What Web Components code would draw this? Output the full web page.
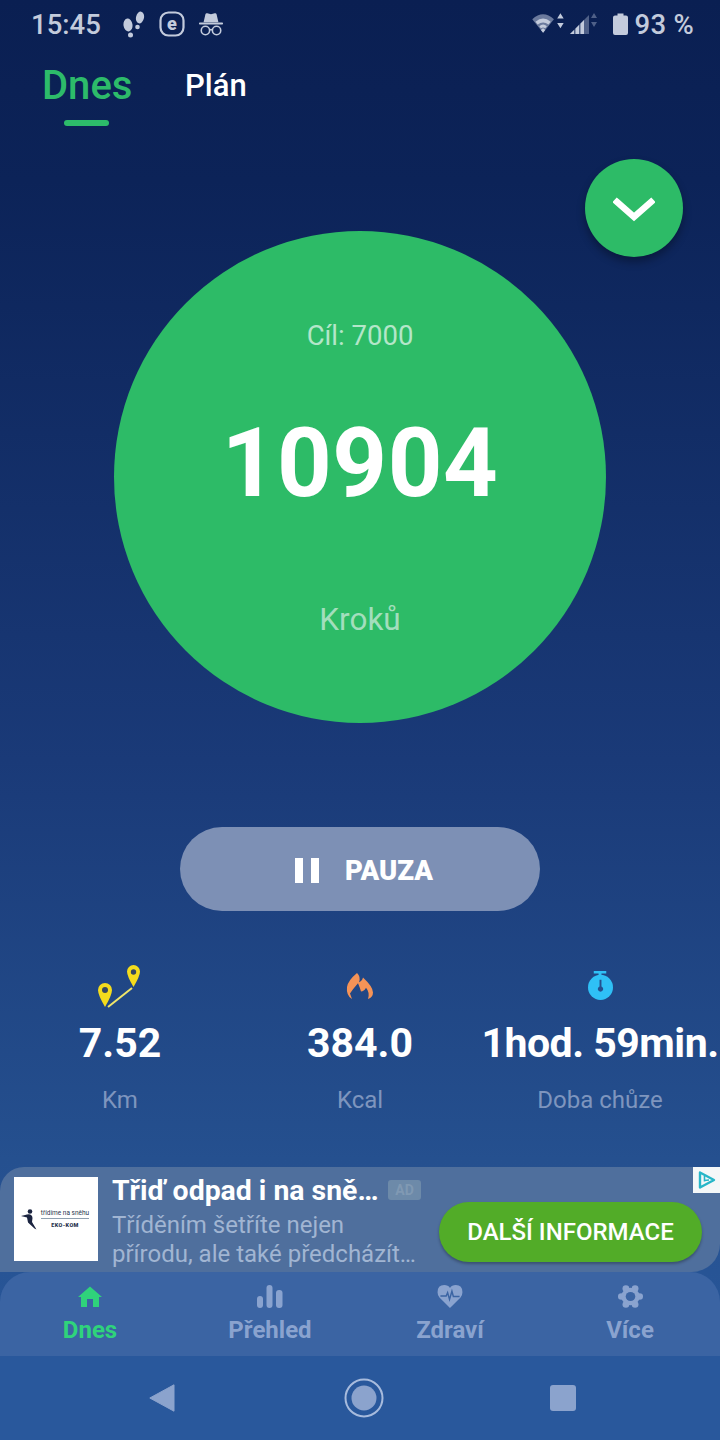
<!DOCTYPE html>
<html lang="cs"><head><meta charset="utf-8"><title>Kroky</title>
<style>
html,body{margin:0;padding:0}
body{font-family:Roboto,"Liberation Sans",sans-serif;background:#0b1f52}
</style></head><body>
<step-app>
  <status-bar></status-bar>
  <top-tabs></top-tabs>
  <step-dial goal="Cíl: 7000" steps="10904" label="Kroků"></step-dial>
  <pause-button>PAUZA</pause-button>
  <stat-row></stat-row>
  <ad-banner></ad-banner>
  <bottom-nav></bottom-nav>
  <system-nav></system-nav>
</step-app>
<script>
function def(name,html){
  customElements.define(name,class extends HTMLElement{
    connectedCallback(){
      if(this.shadowRoot)return;
      const r=this.attachShadow({mode:'open'});
      r.innerHTML=typeof html==='function'?html(this):html;
    }
  });
}
def('step-app',`<style>
:host{display:flex;flex-direction:column;width:720px;height:1440px;overflow:hidden;color:#fff;
background:linear-gradient(180deg,#0a1f52 0,#0c2358 180px,#1a3a78 760px,#25508f 1160px,#2a5a9e 1440px)}
</style><slot></slot>`);

def('status-bar',`<style>
:host{display:flex;align-items:center;height:48px;flex:none;padding:0 26px 0 31px;box-sizing:border-box;color:#c3cbdc;font-size:27.500px;font-weight:500}
.t{width:92px}
.l{display:flex;align-items:center;flex:1}
.r{display:flex;align-items:center}
svg{display:block}
</style>
<div class="l"><span class="t">15:45</span>
<svg width="22" height="27" viewBox="0 0 22 27" fill="#c3cbdc" style="margin-bottom:-1px"><ellipse cx="5" cy="14" rx="4.500" ry="6.500" transform="rotate(-8 5 14)"/><ellipse cx="7.500" cy="24" rx="2.500" ry="2.500"/><ellipse cx="17" cy="6.500" rx="4" ry="6" transform="rotate(12 17 6.500)"/><ellipse cx="14.500" cy="16" rx="2.300" ry="2.300"/></svg>
<svg width="26" height="26" viewBox="0 0 26 26" style="margin-left:14px"><rect x="1.500" y="1.500" width="23" height="23" rx="8" fill="none" stroke="#c3cbdc" stroke-width="2.200"/><text x="13" y="19" text-anchor="middle" font-family="Roboto,sans-serif" font-weight="900" font-size="18" fill="#c3cbdc">e</text></svg>
<svg width="26" height="26" viewBox="0 0 28 26" fill="#c3cbdc" style="margin-left:13px"><path d="M6 11 8 2.500Q8.500 1 10 1.500L14 2.500 18 1.500Q19.500 1 20 2.500L22 11Z"/><rect x="1" y="11.500" width="26" height="2" rx="1"/><g fill="none" stroke="#c3cbdc" stroke-width="1.700"><circle cx="8" cy="20" r="4.500"/><circle cx="20" cy="20" r="4.500"/><path d="M12.500 19.500Q14 18.500 15.500 19.500"/></g></svg>
</div>
<div class="r">
<svg width="33" height="26" viewBox="0 0 30 24"><path d="M0 7.500Q10-1.500 20 7.500L10 20Z" fill="#6b7a9d"/><path d="M3 10Q10 4 17 10L15 12.500Q10 8.500 5 12.500ZM6.500 14Q10 11 13.500 14L12 16Q10 14.500 8 16Z" fill="#c3cbdc"/><path d="M10 16 12 17.500 10 20 8 17.500Z" fill="#c3cbdc"/><path d="M26 2l3 5h-6zM26 16l3-5h-6z" fill="#c3cbdc"/></svg>
<svg width="31" height="24" viewBox="0 0 31 24" style="margin-left:4px"><path d="M1 22 20 3V22Z" fill="#4f6088"/><path d="M1 22 5 18V22ZM6.500 16.500 10 13V22H6.500ZM11.500 11.500 15 8V22H11.500Z" fill="#c3cbdc"/><path d="M25 1l3 5h-6zM25 15l3-5h-6z" fill="#4f6088"/></svg>
<svg width="15" height="24" viewBox="0 0 15 24" style="margin-left:13px"><path d="M4.500 1.500h6V3.500h2.500Q15 3.500 15 5.500V21Q15 23 13 23H2Q0 23 0 21V5.500Q0 3.500 2 3.500H4.500Z" fill="#c3cbdc"/></svg>
<span style="margin-left:6px;letter-spacing:.3px">93 %</span>
</div>`);

def('top-tabs',`<style>
:host{display:flex;height:84px;flex:none;padding-left:42px;box-sizing:border-box;font-weight:500}
.a{position:relative;color:#2dbb6a;font-size:40px;line-height:76px;width:143px}
.a i{position:absolute;left:22px;top:72px;width:45px;height:6px;border-radius:3px;background:#2dbb6a}
.b{font-size:31px;line-height:76px}
</style><div class="a">Dnes<i></i></div><div class="b">Plán</div>`);

def('step-dial',t=>`<style>
:host{display:block;position:relative;flex:none;height:492px;width:492px;margin:99px auto 0;}
.c{width:492px;height:492px;border-radius:50%;background:#2dbb67;display:flex;flex-direction:column;align-items:center;box-sizing:border-box}
.g{margin-top:87px;font-size:27.500px;line-height:36px;color:#b4e6c9}
.n{margin-top:53px;font-size:95.500px;line-height:112px;font-weight:700;color:#fff;letter-spacing:.5px}
.k{margin-top:81px;font-size:31.500px;line-height:40px;color:#a3deBd}
.f{position:absolute;left:471px;top:-72px;width:98px;height:98px;border-radius:50%;background:#2dbb67;box-shadow:0 5px 9px rgba(0,0,0,.32);display:flex;align-items:center;justify-content:center}
.f svg{margin-top:5px}
</style>
<div class="c"><div class="g">${t.getAttribute('goal')}</div><div class="n">${t.getAttribute('steps')}</div><div class="k">${t.getAttribute('label')}</div></div>
<div class="f"><svg width="42" height="28" viewBox="0 0 42 28"><path d="M4 5 21 20 38 5" fill="none" stroke="#fff" stroke-width="6.500" stroke-linecap="square"/></svg></div>`);

def('pause-button',`<style>
:host{display:flex;flex:none;align-items:center;justify-content:center;width:360px;height:84px;margin:104px auto 0;border-radius:42px;background:#7d90b5;box-sizing:border-box;padding:2px 0 0 8px;font-weight:900;font-size:27.500px;color:#fff}
i{display:block;width:8px;height:25px;background:#fff}
.p{display:flex;gap:8px;margin-right:26px}
</style><div class="p"><i></i><i></i></div><slot></slot>`);

def('stat-item',t=>`<style>
:host{display:flex;flex-direction:column;align-items:center;flex:1 1 0;min-width:0;white-space:nowrap}
.i{height:40px;margin-bottom:6px;display:flex;align-items:flex-end;justify-content:center}
.v{font-size:41px;font-weight:700;line-height:46px;margin-top:11px;color:#fff;letter-spacing:${t.hasAttribute('tight')?'-.5px':'0'}}
.l{font-size:24px;line-height:30px;margin-top:19px;color:#7e95be}
</style><div class="i"><slot></slot></div><div class="v">${t.getAttribute('value')}</div><div class="l">${t.getAttribute('label')}</div>`);

def('stat-row',`<style>
:host{display:flex;flex:none;margin-top:52px;height:204px;}
svg{display:block}
</style>
<stat-item value="7.52" label="Km"><svg width="46" height="44" viewBox="0 0 46 44" style="margin-bottom:-6px"><path d="M8 42Q1 30 1 25A7 7 0 0 1 15 25Q15 30 8 42Z" fill="#f4dc1d"/><circle cx="8" cy="25" r="3" fill="#36485f"/><path d="M36.500 22Q30 11 30 6.500A6.500 6.500 0 0 1 43 6.500Q43 11 36.500 22Z" fill="#f4dc1d"/><circle cx="36.500" cy="7" r="2.700" fill="#36485f"/><path d="M11 42 35 23" stroke="#f0e66a" stroke-width="2"/></svg></stat-item>
<stat-item value="384.0" label="Kcal"><svg width="28" height="28" viewBox="0 0 28 30" preserveAspectRatio="none" style="margin-bottom:3px"><path d="M6 29Q0 25 1 16 2 9 11 1 15 5 13 11 16 10 17 6 27 16 27 22 27 27 22 29 24 22 20 17 18 21 15 21 14 17 12 12 7 18 4 23 6 29Z" fill="#f59357"/></svg></stat-item>
<stat-item tight value="1hod. 59min." label="Doba chůze"><svg width="25" height="29" viewBox="0 0 26 30" preserveAspectRatio="none" style="margin-bottom:3px"><path d="M6 0h13v2.500h-5v3h-3v-3H6z" fill="#2fc0f6"/><circle cx="13" cy="17" r="13" fill="#2fc0f6"/><path d="M12 9h2v7a2.800 2.800 0 1 1-2 0z" fill="#25508f"/></svg></stat-item>`);

def('ad-banner',`<style>
:host{display:block;position:relative;flex:none;height:105px;background:#4f6f9d;border-radius:24px 0 28px 0;overflow:hidden}
.row{display:flex;height:100%;box-sizing:border-box;padding:10px 18px 0 14px}
.logo{flex:none;width:84px;height:84px;background:#fff;display:flex;align-items:center;justify-content:center;gap:4px;box-sizing:border-box;padding-right:2px}
.lt{font-size:6.500px;line-height:8px;color:#2a3550;text-align:center;white-space:nowrap}
.lt b{display:block;border-top:1px solid #8fa0b0;margin-top:1px;padding-top:2px;font-size:5.500px;font-weight:900;letter-spacing:.4px}
.tx{flex:none;width:318px;margin-left:14px;position:relative}
.h{font-size:28.400px;line-height:28px;font-weight:700;color:#fff;white-space:nowrap}
.ad{position:absolute;left:276px;top:3px;width:33px;height:20px;border-radius:3px;background:#6d8aa9;color:#8099b3;font-size:14px;font-weight:700;line-height:20px;text-align:center}
.d{font-size:24px;line-height:29px;color:#a1b5d2;margin-top:6px;white-space:nowrap}
.b{position:absolute;left:439px;top:35px;width:263px;height:60px;border-radius:30px;background:#52ac28;box-shadow:0 2px 3px rgba(0,0,0,.28);font-size:24px;font-weight:500;color:#fff;display:flex;align-items:center;justify-content:center;white-space:nowrap}
.ch{position:absolute;right:0;top:0;width:27px;height:26px;background:#f4f7f8;display:flex;align-items:center;justify-content:center}
</style>
<div class="row">
<div class="logo"><svg width="16" height="21" viewBox="0 0 16 21"><circle cx="9" cy="2.500" r="2.300" fill="#1b2440"/><path d="M0 7 6 5.500Q11 4.500 11.500 9L11 13 15.500 20.500 13.500 19.500 7 13.500 6 8.500Z" fill="#1b2440"/></svg><div class="lt">třídíme na sněhu<b>EKO-KOM</b></div></div>
<div class="tx"><div class="h">Třiď odpad i na sně…</div><div class="ad">AD</div>
<div class="d">Tříděním šetříte nejen<br>přírodu, ale také předcházít…</div></div>
<div class="b">DALŠÍ INFORMACE</div>
</div>
<div class="ch"><svg width="20" height="20" viewBox="0 0 20 20"><path d="M3 2.500 17 10 3 17.500Z" fill="none" stroke="#27b6c8" stroke-width="2.400" stroke-linejoin="round"/><path d="M7.500 6v5.500M7.500 10.500 12 10" fill="none" stroke="#27b6c8" stroke-width="1.600"/></svg></div>`);

def('nav-item',t=>`<style>
:host{display:flex;flex-direction:column;align-items:center;flex:1 1 0;color:${t.hasAttribute('active')?'#2fd37b':'#8aa3cf'}}
.i{height:34px;margin-top:7px;display:flex;align-items:center;justify-content:center}
.l{font-size:24px;font-weight:700;line-height:30px;margin-top:2px}
</style><div class="i"><slot></slot></div><div class="l">${t.getAttribute('label')}</div>`);

def('bottom-nav',`<style>
:host{display:flex;flex:none;height:84px;background:#3b64a3;border-radius:30px 30px 0 0;box-sizing:border-box}
svg{display:block}
</style>
<nav-item label="Dnes" active><svg width="24" height="21" viewBox="0 0 24 21"><path d="M12 .5 24 11H21V21H15V13H9V21H3V11H0Z" fill="#2fd37b"/></svg></nav-item>
<nav-item label="Přehled"><svg width="26" height="23" viewBox="0 0 26 23" fill="#8aa3cf"><rect x="0" y="11" width="6" height="12" rx="3"/><rect x="9.500" y="0" width="6" height="23" rx="3"/><rect x="19" y="5" width="6.500" height="18" rx="3"/></svg></nav-item>
<nav-item label="Zdraví"><svg width="26" height="23" viewBox="0 0 26 24"><path d="M13 24 2 13Q0 10.500 0 7.500 0 0 7 0 11 0 13 3 15 0 19 0 26 0 26 7.500 26 10.500 24 13Z" fill="#8aa3cf"/><path d="M3 11.500H9L10.500 8 12.500 15 15 6.500 16.500 12H23" fill="none" stroke="#3b64a3" stroke-width="1.500"/></svg></nav-item>
<nav-item label="Více"><svg width="25" height="23" viewBox="-13 -12.500 26 25" preserveAspectRatio="none" fill="#8aa3cf"><circle r="9.500"/><circle cx="9.500" r="3.500"/><circle cx="-9.500" r="3.500"/><circle cx="4.800" cy="-8.600" r="3.500"/><circle cx="-4.800" cy="-8.600" r="3.500"/><circle cx="4.800" cy="8.600" r="3.500"/><circle cx="-4.800" cy="8.600" r="3.500"/><circle r="5" fill="#3b64a3"/></svg></nav-item>`);

def('system-nav',`<style>
:host{display:flex;flex:none;height:84px;background:#29589c;align-items:center;justify-content:center;padding-left:5px;gap:166px;box-sizing:border-box}
svg{display:block}
</style>
<svg width="26" height="28" viewBox="0 0 26 28" style="margin-right:3px"><path d="M25 .8V27.200L.8 14Z" fill="#8ba3cd" stroke="#8ba3cd" stroke-linejoin="round"/></svg>
<svg width="40" height="40" viewBox="0 0 40 40"><circle cx="20" cy="20" r="18.500" fill="none" stroke="#a7bbdd" stroke-width="2"/><circle cx="20" cy="20" r="12.500" fill="#8ba3cd"/></svg>
<svg width="26" height="26" viewBox="0 0 26 26"><rect width="26" height="26" rx="3" fill="#8ba3cd"/></svg>`);
</script>
</body></html>
